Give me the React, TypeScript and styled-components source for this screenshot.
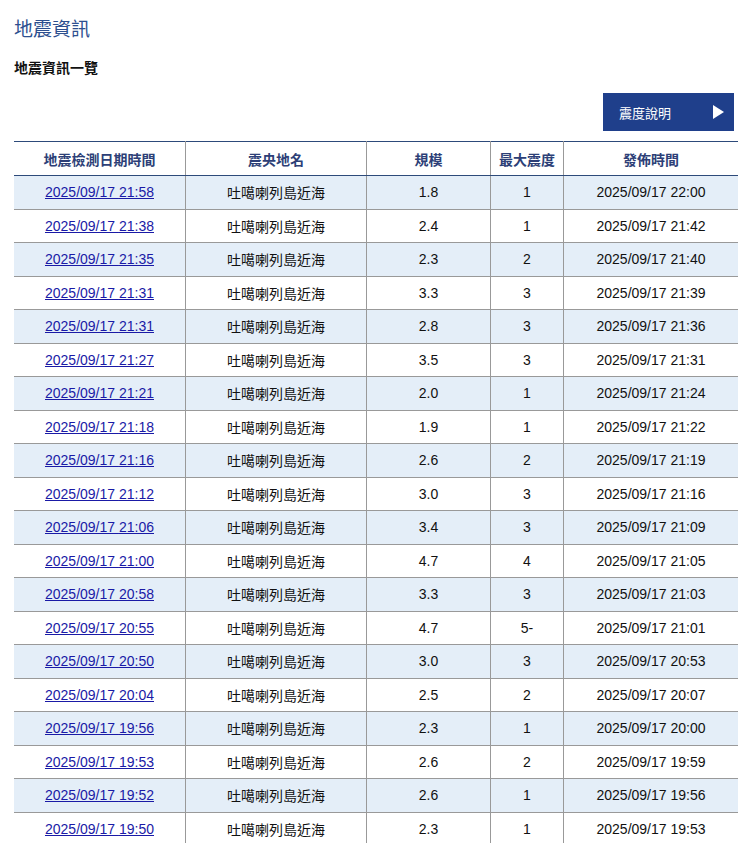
import React from "react";
import styled, { createGlobalStyle } from "styled-components";

const G = createGlobalStyle`
  body { margin: 0; background: #fff; font-family: "Liberation Sans", Arial, "Noto Sans CJK TC", sans-serif; }
`;
const Page = styled.div`padding: 16px 15px 0 14px;`;
const Title = styled.h1`margin: 0; font-size: 19px; font-weight: normal; color: #2d4f8f; line-height: 28px;`;
const Sub = styled.h2`margin: 14px 0 0; font-size: 14px; font-weight: bold; color: #111; line-height: 20px;`;
const Bar = styled.div`display: flex; justify-content: flex-end; margin-top: 15px;`;
const Btn = styled.div`
  width: 131px; height: 38px; background: #1f3f8b; color: #fff; font-size: 13px;
  display: flex; align-items: center; justify-content: space-between; padding: 0 10px 0 16px; box-sizing: border-box;
`;
const Tri = styled.span`width: 0; height: 0; border-left: 11px solid #fff; border-top: 7px solid transparent; border-bottom: 7px solid transparent;`;
const Table = styled.table`
  width: 720px; margin-top: 10px; border-collapse: collapse; font-size: 14px; table-layout: fixed;
  border-top: 1px solid #2d4a7a;
`;
const Th = styled.th<{ w: number }>`
  width: ${p => p.w}px; height: 33px; color: #2d3f77; font-size: 14px; font-weight: bold;
  border-bottom: 1px solid #2d4a7a; border-left: 1px solid #999; padding: 0;
  &:first-child { border-left: none; }
`;
const Tr = styled.tr<{ odd: boolean }>`background: ${p => (p.odd ? "#e4eef8" : "#fff")};`;
const Td = styled.td`
  height: 32.5px; text-align: center; color: #111; padding: 0;
  border-bottom: 1px solid #999; border-left: 1px solid #999;
  &:first-child { border-left: none; }
`;
const A = styled.a`color: #1a1aa6; text-decoration: underline;`;

const rows: [string, string, string, string][] = [
  ["21:58", "1.8", "1", "22:00"], ["21:38", "2.4", "1", "21:42"], ["21:35", "2.3", "2", "21:40"],
  ["21:31", "3.3", "3", "21:39"], ["21:31", "2.8", "3", "21:36"], ["21:27", "3.5", "3", "21:31"],
  ["21:21", "2.0", "1", "21:24"], ["21:18", "1.9", "1", "21:22"], ["21:16", "2.6", "2", "21:19"],
  ["21:12", "3.0", "3", "21:16"], ["21:06", "3.4", "3", "21:09"], ["21:00", "4.7", "4", "21:05"],
  ["20:58", "3.3", "3", "21:03"], ["20:55", "4.7", "5-", "21:01"], ["20:50", "3.0", "3", "20:53"],
  ["20:04", "2.5", "2", "20:07"], ["19:56", "2.3", "1", "20:00"], ["19:53", "2.6", "2", "19:59"],
  ["19:52", "2.6", "1", "19:56"], ["19:50", "2.3", "1", "19:53"],
];

export default function App() {
  return (
    <Page>
      <G />
      <Title>地震資訊</Title>
      <Sub>地震資訊一覽</Sub>
      <Bar><Btn>震度說明<Tri /></Btn></Bar>
      <Table>
        <thead>
          <tr>
            <Th w={171}>地震檢測日期時間</Th>
            <Th w={180}>震央地名</Th>
            <Th w={123}>規模</Th>
            <Th w={72}>最大震度</Th>
            <Th w={174}>發佈時間</Th>
          </tr>
        </thead>
        <tbody>
          {rows.map((r, i) => (
            <Tr key={i} odd={i % 2 === 0}>
              <Td><A href="#">2025/09/17 {r[0]}</A></Td>
              <Td>吐噶喇列島近海</Td>
              <Td>{r[1]}</Td>
              <Td>{r[2]}</Td>
              <Td>2025/09/17 {r[3]}</Td>
            </Tr>
          ))}
        </tbody>
      </Table>
    </Page>
  );
}
